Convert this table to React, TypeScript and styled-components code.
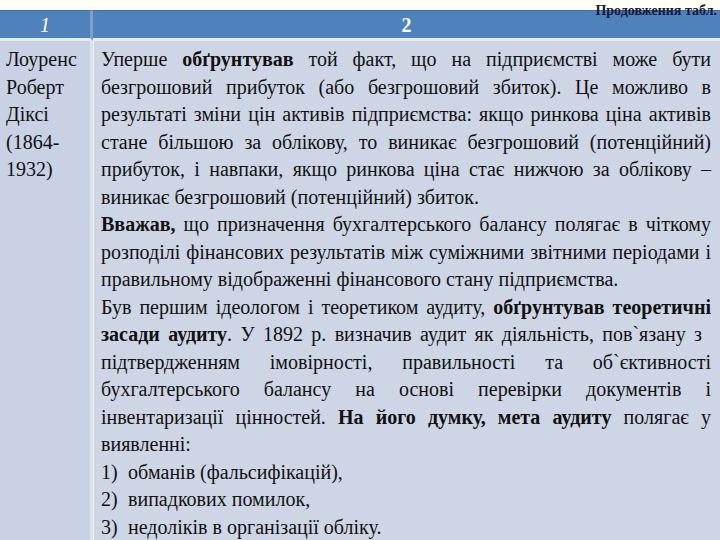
import React from "react";
import styled, { createGlobalStyle } from "styled-components";

const Global = createGlobalStyle`
  html, body { margin: 0; padding: 0; }
  body {
    width: 720px;
    height: 540px;
    overflow: hidden;
    background: #fffff6;
    font-family: "Liberation Serif", serif;
  }
`;

const Page = styled.div`
  position: relative;
  width: 720px;
  height: 540px;
  overflow: hidden;
  padding-top: 10px;
  box-sizing: border-box;
  font-family: "Liberation Serif", serif;
`;

const Note = styled.div`
  position: absolute;
  top: 3px;
  right: 3px;
  font-family: "Liberation Serif", serif;
  font-weight: bold;
  font-size: 14px;
  line-height: 16px;
  color: #141838;
  z-index: 2;
`;

const Table = styled.div`
  display: grid;
  grid-template-columns: 93px 1fr;
  grid-template-rows: 31px 1fr;
  height: 530px;
`;

const HeadCell = styled.div<{ $italic?: boolean; $first?: boolean }>`
  background: #4f81bd;
  border-top: 1px solid #3f6ea9;
  border-bottom: 3px solid #e6ecf5;
  border-right: ${(p) => (p.$first ? "3px solid #7c9fcc" : "none")};
  display: flex;
  align-items: center;
  justify-content: center;
  color: #ffffff;
  font-family: "Liberation Serif", serif;
  font-size: 20px;
  font-style: ${(p) => (p.$italic ? "italic" : "normal")};
  font-weight: ${(p) => (p.$italic ? "normal" : "bold")};
  padding-top: 2px;
`;

const NameCell = styled.div`
  background: #c8d2e4;
  border-right: 3px solid #dce3ef;
  padding: 5px 4px 0 6px;
  font-family: "Liberation Serif", serif;
  font-size: 20px;
  line-height: 27.5px;
  color: #111111;
`;

const TextCell = styled.div`
  background: #ced6e6;
  border-left: 1px solid #f4f6fa;
  padding: 5px 9px 0 7px;
  font-family: "Liberation Serif", serif;
  font-size: 20px;
  line-height: 27.5px;
  color: #111111;
`;

const Line = styled.div<{ $justify?: boolean; $short?: boolean }>`
  font-family: "Liberation Serif", serif;
  text-align: ${(p) => (p.$justify ? "justify" : "left")};
  text-align-last: ${(p) => (p.$justify ? "justify" : "left")};
  padding-right: ${(p) => (p.$short ? "9px" : "0")};
`;

const Num = styled.span`
  display: inline-block;
  width: 27px;
`;

const B = styled.b`
  font-family: "Liberation Serif", serif;
  font-weight: bold;
`;

type L = { j?: boolean; s?: boolean; c: React.ReactNode };

const lines: L[] = [
  { j: true, c: <>Уперше <B>обґрунтував</B> той факт, що на підприємстві може бути</> },
  { j: true, c: "безгрошовий прибуток (або безгрошовий збиток). Це можливо в" },
  { j: true, c: "результаті зміни цін активів підприємства: якщо ринкова ціна активів" },
  { j: true, c: "стане більшою за облікову, то виникає безгрошовий (потенційний)" },
  { j: true, c: "прибуток, і навпаки, якщо ринкова ціна стає нижчою за облікову –" },
  { c: "виникає безгрошовий (потенційний) збиток." },
  { j: true, c: <><B>Вважав,</B> що призначення бухгалтерського балансу полягає в чіткому</> },
  { j: true, c: "розподілі фінансових результатів між суміжними звітними періодами і" },
  { c: "правильному відображенні фінансового стану підприємства." },
  { j: true, c: <>Був першим ідеологом і теоретиком аудиту, <B>обґрунтував теоретичні</B></> },
  { j: true, s: true, c: <><B>засади аудиту</B>. У 1892 р. визначив аудит як діяльність, пов`язану з</> },
  { j: true, c: "підтвердженням імовірності, правильності та об`єктивності" },
  { j: true, c: "бухгалтерського балансу на основі перевірки документів і" },
  { j: true, c: <>інвентаризації цінностей. <B>На його думку, мета аудиту</B> полягає у</> },
  { c: "виявленні:" },
  { c: <><Num>1)</Num>обманів (фальсифікацій),</> },
  { c: <><Num>2)</Num>випадкових помилок,</> },
  { c: <><Num>3)</Num>недоліків в організації обліку.</> },
];

export default function App() {
  return (
    <>
      <Global />
      <Page>
        <Note>Продовження табл.</Note>
        <Table>
          <HeadCell $italic $first>1</HeadCell>
          <HeadCell>2</HeadCell>
          <NameCell>
            <Line>Лоуренс</Line>
            <Line>Роберт</Line>
            <Line>Діксі</Line>
            <Line>(1864-</Line>
            <Line>1932)</Line>
          </NameCell>
          <TextCell>
            {lines.map((l, i) => (
              <Line key={i} $justify={l.j} $short={l.s}>
                {l.c}
              </Line>
            ))}
          </TextCell>
        </Table>
      </Page>
    </>
  );
}
